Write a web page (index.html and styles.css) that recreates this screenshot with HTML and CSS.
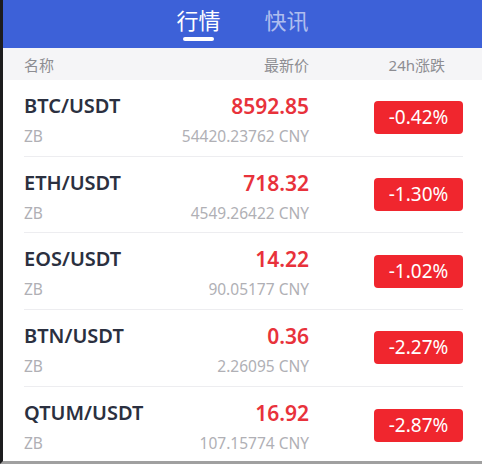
FILE: index.html
```html
<html>
	<head>
		<title>行情</title>
		<meta charset="utf-8">
		<link rel="stylesheet" href="styles.css">
	</head>
	<body>
		<div class="screen">
			<div class="topbar">
				<div class="tab active">行情</div>
				<div class="tab">快讯</div>
			</div>
			<div class="colhead">
				<span class="c-name">名称</span>
				<span class="c-price">最新价</span>
				<span class="c-change">24h涨跌</span>
			</div>
			<div class="list">
				<div class="row">
					<div class="pair"><div class="sym">BTC/USDT</div><div class="sub">ZB</div></div>
					<div class="price"><div class="last">8592.85</div><div class="sub">54420.23762 CNY</div></div>
					<div class="change"><span class="badge">-0.42%</span></div>
				</div>
				<div class="row">
					<div class="pair"><div class="sym">ETH/USDT</div><div class="sub">ZB</div></div>
					<div class="price"><div class="last">718.32</div><div class="sub">4549.26422 CNY</div></div>
					<div class="change"><span class="badge">-1.30%</span></div>
				</div>
				<div class="row">
					<div class="pair"><div class="sym">EOS/USDT</div><div class="sub">ZB</div></div>
					<div class="price"><div class="last">14.22</div><div class="sub">90.05177 CNY</div></div>
					<div class="change"><span class="badge">-1.02%</span></div>
				</div>
				<div class="row">
					<div class="pair"><div class="sym">BTN/USDT</div><div class="sub">ZB</div></div>
					<div class="price"><div class="last">0.36</div><div class="sub">2.26095 CNY</div></div>
					<div class="change"><span class="badge">-2.27%</span></div>
				</div>
				<div class="row">
					<div class="pair"><div class="sym">QTUM/USDT</div><div class="sub">ZB</div></div>
					<div class="price"><div class="last">16.92</div><div class="sub">107.15774 CNY</div></div>
					<div class="change"><span class="badge">-2.87%</span></div>
				</div>
			</div>
		</div>
	</body>
</html>
```

FILE: styles.css
```css
body {
  margin: 0;
  font-family: "Noto Sans", "Noto Sans CJK SC", sans-serif;
  background: #fff;
}

.screen {
  width: 479px;
  height: 461px;
  border-left: 3px solid #1c1c1e;
  border-bottom: 3px solid #a0a0a0;
  overflow: hidden;
}

.topbar {
  height: 48px;
  background-color: #3d61d8;
  display: flex;
  justify-content: center;
  gap: 44px;
}

.tab {
  font-size: 22px;
  line-height: 40px;
  color: rgba(255, 255, 255, 0.6);
  position: relative;
}

.tab.active {
  color: #fff;
}

.tab.active::after {
  content: "";
  position: absolute;
  left: 7px;
  right: 7px;
  top: 37px;
  height: 4px;
  border-radius: 2px;
  background: #fff;
}

.colhead {
  height: 32px;
  background-color: #f5f5f7;
  display: flex;
  align-items: center;
  padding: 0 19px 0 21px;
  font-size: 15px;
  color: #8d8d92;
}

.c-name {
  flex: 1;
}

.c-price {
  flex-shrink: 0;
  text-align: right;
}

.c-change {
  flex-shrink: 0;
  width: 154px;
  text-align: right;
  padding-right: 18px;
  box-sizing: border-box;
}

.list {
  padding: 0 19px 0 21px;
}

.row {
  height: 76.7px;
  box-sizing: border-box;
  padding-top: 3px;
  border-bottom: 1px solid #ededf0;
  display: flex;
  align-items: center;
}

.row:last-child {
  border-bottom: none;
}

.pair {
  flex: 1;
  min-width: 0;
}

.sym {
  font-size: 20px;
  font-weight: 600;
  color: #2b3040;
  line-height: 28px;
}

.sub {
  font-size: 15.5px;
  color: #b0b0b5;
  line-height: 22px;
  margin-top: 5px;
}

.price {
  flex-shrink: 0;
  text-align: right;
}

.last {
  font-size: 21px;
  font-weight: 600;
  color: #e8323b;
  line-height: 28px;
}

.change {
  flex-shrink: 0;
  width: 154px;
  display: flex;
  justify-content: flex-end;
  margin-top: -3px;
}

.badge {
  width: 89px;
  height: 33px;
  line-height: 33px;
  border-radius: 4px;
  background-color: #f0262e;
  color: #fff;
  font-size: 19px;
  text-align: center;
}
```
